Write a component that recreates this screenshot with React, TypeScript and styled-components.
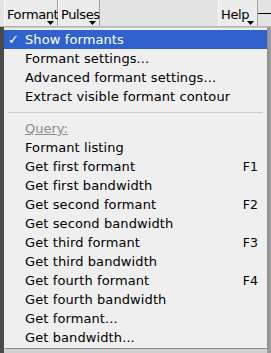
import styled, { createGlobalStyle } from 'styled-components'

interface Item {
  label: string
  shortcut?: string
  checked?: boolean
  active?: boolean
}

const topItems: Item[] = [
  { label: 'Show formants', checked: true, active: true },
  { label: 'Formant settings...' },
  { label: 'Advanced formant settings...' },
  { label: 'Extract visible formant contour' },
]

const queryItems: Item[] = [
  { label: 'Formant listing' },
  { label: 'Get first formant', shortcut: 'F1' },
  { label: 'Get first bandwidth' },
  { label: 'Get second formant', shortcut: 'F2' },
  { label: 'Get second bandwidth' },
  { label: 'Get third formant', shortcut: 'F3' },
  { label: 'Get third bandwidth' },
  { label: 'Get fourth formant', shortcut: 'F4' },
  { label: 'Get fourth bandwidth' },
  { label: 'Get formant...' },
  { label: 'Get bandwidth...' },
]

function Arrow() {
  return (
    <S.Arrow width="7" height="4" viewBox="0 0 7 4">
      <path d="M0 0 L7 0 L3.5 4 Z" fill="#000" />
    </S.Arrow>
  )
}

function Row({ label, shortcut, checked, active }: Item) {
  return (
    <S.Row $active={!!active}>
      <S.Check>{checked ? '✓' : ''}</S.Check>
      <S.Label>{label}</S.Label>
      {shortcut && <S.Key>{shortcut}</S.Key>}
    </S.Row>
  )
}

function App() {
  return (
    <>
      <Global />
      <S.Page>
        <S.MenuBar>
          <S.MenuButton $w={54}>Formant<Arrow /></S.MenuButton>
          <S.MenuButton $w={42}>Pulses<Arrow /></S.MenuButton>
          <S.Spacer />
          <S.MenuButton $w={40}>Help<Arrow /></S.MenuButton>
          <S.Rule />
        </S.MenuBar>
        <S.Canvas>
          <S.Menu>
            {topItems.map((it, i) => (
              <Row key={`t-${i}`} {...it} />
            ))}
            <S.Separator />
            <S.Caption>Query:</S.Caption>
            {queryItems.map((it, i) => (
              <Row key={`q-${i}`} {...it} />
            ))}
          </S.Menu>
        </S.Canvas>
      </S.Page>
    </>
  )
}

export default App

const Global = createGlobalStyle`
  html, body {
    margin: 0;
    padding: 0;
    width: 271px;
    height: 353px;
    overflow: hidden;
    background: #d9d9d9;
  }
  body {
    font-family: "DejaVu Sans", "Liberation Sans", sans-serif;
    font-size: 13px;
    color: #000;
  }
`

const S = {
  Page: styled.div`
    display: flex;
    flex-direction: column;
    width: 271px;
    height: 353px;
  `,
  MenuBar: styled.div`
    display: flex;
    align-items: stretch;
    height: 26px;
    padding-left: 4px;
    background: #e3e3e3;
    border-bottom: 1px solid #b5b5b5;
  `,
  MenuButton: styled.div<{ $w: number }>`
    position: relative;
    display: flex;
    align-items: center;
    width: ${(p) => p.$w}px;
    box-sizing: border-box;
    padding: 2px 0 0 2px;
    background: #ececec;
    border-left: 1px solid #fafafa;
    border-right: 1px solid #a0a0a0;
    font-size: 13px;
    letter-spacing: -0.4px;
    white-space: nowrap;
  `,
  Arrow: styled.svg`
    position: absolute;
    right: 3px;
    bottom: 1px;
  `,
  Spacer: styled.div`
    flex: 1;
  `,
  Rule: styled.div`
    width: 13px;
    align-self: center;
    height: 1px;
    background: #000;
  `,
  Canvas: styled.div`
    position: relative;
    flex: 1;
    background: linear-gradient(90deg, #4a4a4a 0 4px, #d0d0d0 4px 267px, #9a9a9a 267px);
  `,
  Menu: styled.div`
    position: absolute;
    left: 4px;
    top: 0;
    width: 263px;
    height: 321px;
    box-sizing: border-box;
    padding-top: 2px;
    background: #efefef;
    border-top: 1px solid #c8c8c8;
    box-shadow: 1px 1px 0 #8a8a8a;
  `,
  Row: styled.div<{ $active: boolean }>`
    display: flex;
    align-items: center;
    height: 19px;
    padding-right: 9px;
    background: ${(p) => (p.$active ? '#2f62cf' : 'transparent')};
    color: ${(p) => (p.$active ? '#fff' : '#000')};
  `,
  Check: styled.span`
    width: 21px;
    padding-left: 4px;
    box-sizing: border-box;
  `,
  Label: styled.span`
    flex: 1;
    white-space: nowrap;
    letter-spacing: 0.1px;
  `,
  Key: styled.span`
    font-size: 12.5px;
  `,
  Separator: styled.div`
    height: 13px;
    display: flex;
    align-items: center;
    &::after {
      content: '';
      flex: 1;
      margin: 0 4px;
      height: 1px;
      background: #c9c9c9;
    }
  `,
  Caption: styled.div`
    height: 19px;
    display: flex;
    align-items: center;
    padding-left: 21px;
    color: #8c8c8c;
    text-decoration: underline;
  `,
}
